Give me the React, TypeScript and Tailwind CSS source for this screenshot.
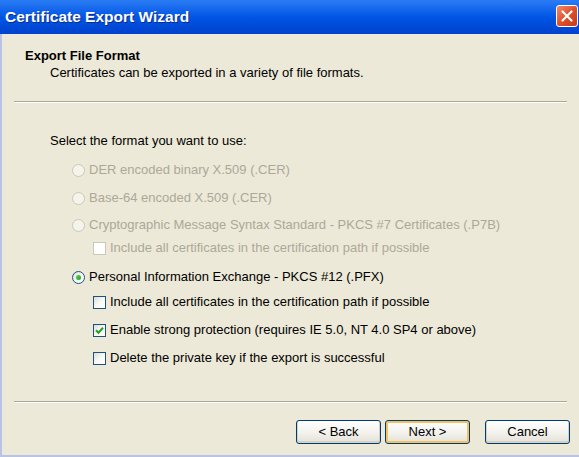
import type { ReactNode } from "react";

function Radio({ checked, disabled }: { checked?: boolean; disabled?: boolean }) {
  return (
    <span
      className={`flex h-[13px] w-[13px] shrink-0 items-center justify-center rounded-full border ${
        disabled
          ? "border-[#cac8bb] bg-[#f5f4ea]"
          : "border-[#1c5180] bg-gradient-to-br from-[#dcdbd5] via-[#f8f8f6] to-white"
      }`}
    >
      {checked && (
        <span className="h-[5px] w-[5px] rounded-full bg-gradient-to-br from-[#55d551] to-[#21a121]" />
      )}
    </span>
  );
}

function Check({ checked, disabled }: { checked?: boolean; disabled?: boolean }) {
  return (
    <span
      className={`flex h-[13px] w-[13px] shrink-0 items-center justify-center border ${
        disabled
          ? "border-[#cac8bb] bg-white"
          : "border-[#1c5180] bg-gradient-to-br from-[#dcdbd5] via-[#f8f8f6] to-white"
      }`}
    >
      {checked && (
        <svg width="9" height="9" viewBox="0 0 9 9">
          <path d="M1 4.2 L3.5 6.7 L8 1.8" fill="none" stroke="#21a121" strokeWidth="2" />
        </svg>
      )}
    </span>
  );
}

function Row({ children, label, disabled, className }: { children: ReactNode; label: string; disabled?: boolean; className: string }) {
  return (
    <div className={`flex h-[16px] items-center gap-[4px] ${className}`}>
      {children}
      <span className={disabled ? "text-[#aca899]" : "text-black"}>{label}</span>
    </div>
  );
}

function Button({ label, active }: { label: string; active?: boolean }) {
  return (
    <button
      className={`flex h-[24px] w-[85px] items-center justify-center rounded-[3px] border border-[#003c74] bg-gradient-to-b from-white via-[#f4f3ee] to-[#e3e1d6] text-black ${
        active ? "shadow-[inset_0_0_0_2px_#f5c15c]" : "shadow-[inset_0_-1px_0_1px_#d6d0c5]"
      }`}
    >
      {label}
    </button>
  );
}

function Separator() {
  return (
    <div className="mx-[12px] flex flex-col">
      <div className="h-px bg-[#aca899]" />
      <div className="h-px bg-white" />
    </div>
  );
}

export default function App() {
  return (
    <div className="flex h-[457px] w-[579px] flex-col overflow-hidden bg-[#ece9d8] font-['Liberation_Sans',Arial,sans-serif] text-[13px] leading-[16px]">
      <div className="flex h-[34px] shrink-0 items-center justify-between bg-gradient-to-b from-[#2a7cf4] via-[#0055e5] to-[#0042cc] pl-[5px] pr-[1px]">
        <span className="text-[15.5px] font-bold text-white [text-shadow:1px_1px_#0b2a8c]">
          Certificate Export Wizard
        </span>
        <div className="mb-[3px] flex h-[22px] w-[22px] items-center justify-center rounded-[3px] border border-white bg-gradient-to-br from-[#ef8a6b] via-[#e0502a] to-[#c3391a]">
          <svg width="12" height="12" viewBox="0 0 12 12">
            <path d="M1.5 1.5 L10.5 10.5 M10.5 1.5 L1.5 10.5" stroke="white" strokeWidth="2.2" strokeLinecap="round" />
          </svg>
        </div>
      </div>

      <div className="flex flex-1 flex-col border-l-2 border-b-2 border-[#b7c4e8]">
        <div className="flex flex-col pt-[14px] pb-[20px]">
          <span className="pl-[23px] font-bold text-black">Export File Format</span>
          <span className="mt-px pl-[48px] text-black">
            Certificates can be exported in a variety of file formats.
          </span>
        </div>
        <Separator />

        <div className="flex flex-col pl-[48px]">
          <div className="mt-[30px] text-black">Select the format you want to use:</div>
          <div className="flex flex-col pl-[22px]">
            <Row label="DER encoded binary X.509 (.CER)" disabled className="mt-[13px]">
              <Radio disabled />
            </Row>
            <Row label="Base-64 encoded X.509 (.CER)" disabled className="mt-[12px]">
              <Radio disabled />
            </Row>
            <Row label="Cryptographic Message Syntax Standard - PKCS #7 Certificates (.P7B)" disabled className="mt-[11px]">
              <Radio disabled />
            </Row>
            <Row label="Include all certificates in the certification path if possible" disabled className="mt-[7px] pl-[21px]">
              <Check disabled />
            </Row>
            <Row label="Personal Information Exchange - PKCS #12 (.PFX)" className="mt-[13px]">
              <Radio checked />
            </Row>
            <Row label="Include all certificates in the certification path if possible" className="mt-[9px] pl-[21px]">
              <Check />
            </Row>
            <Row label="Enable strong protection (requires IE 5.0, NT 4.0 SP4 or above)" className="mt-[12px] pl-[21px]">
              <Check checked />
            </Row>
            <Row label="Delete the private key if the export is successful" className="mt-[12px] pl-[21px]">
              <Check />
            </Row>
          </div>
        </div>

        <div className="mt-auto flex flex-col pb-[11px]">
          <Separator />
          <div className="mt-[17px] flex justify-end pr-[9px]">
            <Button label="< Back" />
            <div className="ml-[4px]">
              <Button label="Next >" active />
            </div>
            <div className="ml-[15px]">
              <Button label="Cancel" />
            </div>
          </div>
        </div>
      </div>
    </div>
  );
}
